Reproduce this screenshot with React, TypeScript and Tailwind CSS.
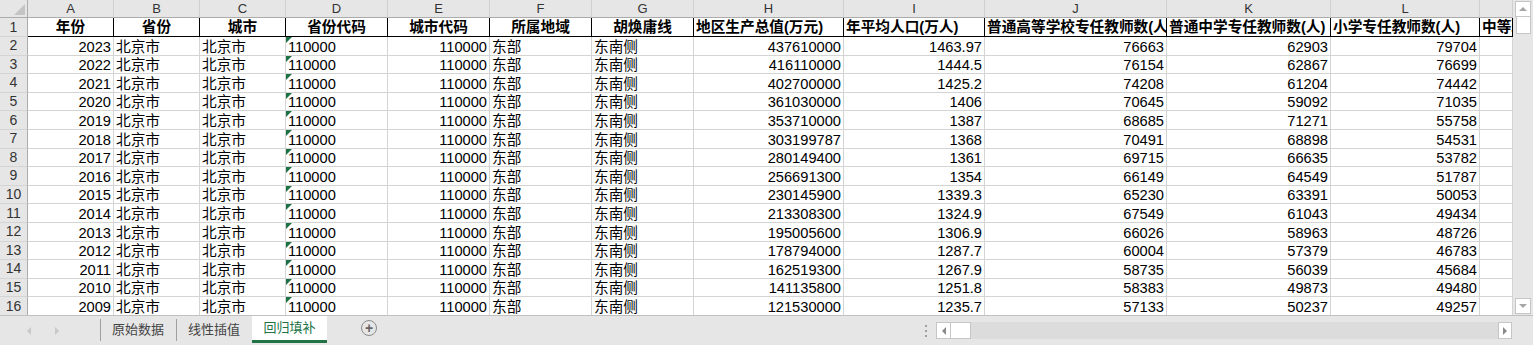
import React from 'react';

type Align = 'l' | 'r' | 'c';

const colLetters = ['A', 'B', 'C', 'D', 'E', 'F', 'G', 'H', 'I', 'J', 'K', 'L', ''];
const colWidths = [
  'w-[86px]', 'w-[86px]', 'w-[86px]', 'w-[102px]', 'w-[102px]', 'w-[102px]', 'w-[102px]',
  'w-[150px]', 'w-[141px]', 'w-[182px]', 'w-[164px]', 'w-[149px]', 'w-[33px]',
];

const headers = [
  '年份', '省份', '城市', '省份代码', '城市代码', '所属地域', '胡焕庸线',
  '地区生产总值(万元)', '年平均人口(万人)', '普通高等学校专任教师数(人)', '普通中学专任教师数(人)', '小学专任教师数(人)', '中等职业学校专任教师数(人)',
];
const headerAlign: Align[] = ['c', 'c', 'c', 'c', 'c', 'c', 'c', 'l', 'l', 'l', 'l', 'l', 'l'];

const rows: (string | number)[][] = [
  [2023, 437610000, 1463.97, 76663, 62903, 79704],
  [2022, 416110000, 1444.5, 76154, 62867, 76699],
  [2021, 402700000, 1425.2, 74208, 61204, 74442],
  [2020, 361030000, 1406, 70645, 59092, 71035],
  [2019, 353710000, 1387, 68685, 71271, 55758],
  [2018, 303199787, 1368, 70491, 68898, 54531],
  [2017, 280149400, 1361, 69715, 66635, 53782],
  [2016, 256691300, 1354, 66149, 64549, 51787],
  [2015, 230145900, 1339.3, 65230, 63391, 50053],
  [2014, 213308300, 1324.9, 67549, 61043, 49434],
  [2013, 195005600, 1306.9, 66026, 58963, 48726],
  [2012, 178794000, 1287.7, 60004, 57379, 46783],
  [2011, 162519300, 1267.9, 58735, 56039, 45684],
  [2010, 141135800, 1251.8, 58383, 49873, 49480],
  [2009, 121530000, 1235.7, 57133, 50237, 49257],
];

const alignCls = (a: Align) =>
  a === 'r' ? 'justify-end pr-[2px]' : a === 'c' ? 'justify-center' : 'justify-start pl-[2px]';

function Cell({ w, align, children, flag }: { w: string; align: Align; children?: React.ReactNode; flag?: boolean }) {
  return (
    <div className={`${w} shrink-0 h-full relative flex items-end overflow-hidden whitespace-nowrap border-r border-b border-[#d4d4d4] ${alignCls(align)}`}>
      {flag && (
        <div className="absolute left-0 top-0 w-0 h-0 border-t-[6px] border-r-[6px] border-t-[#1e7145] border-r-transparent" />
      )}
      <span className="leading-[16px]">{children}</span>
    </div>
  );
}

function DataRow({ n, r }: { n: number; r: (string | number)[] }) {
  const [year, gdp, pop, t1, t2, t3] = r;
  return (
    <div className="flex h-[18.6px] shrink-0">
      <div className="w-[28px] shrink-0 flex items-center justify-center bg-[#e6e6e6] border-r border-r-[#ababab] border-b border-b-[#d4d4d4] text-[#333] text-[14px]">{n}</div>
      <Cell w={colWidths[0]} align="r">{year}</Cell>
      <Cell w={colWidths[1]} align="l">北京市</Cell>
      <Cell w={colWidths[2]} align="l">北京市</Cell>
      <Cell w={colWidths[3]} align="l" flag>110000</Cell>
      <Cell w={colWidths[4]} align="r">110000</Cell>
      <Cell w={colWidths[5]} align="l">东部</Cell>
      <Cell w={colWidths[6]} align="l">东南侧</Cell>
      <Cell w={colWidths[7]} align="r">{gdp}</Cell>
      <Cell w={colWidths[8]} align="r">{pop}</Cell>
      <Cell w={colWidths[9]} align="r">{t1}</Cell>
      <Cell w={colWidths[10]} align="r">{t2}</Cell>
      <Cell w={colWidths[11]} align="r">{t3}</Cell>
      <Cell w={colWidths[12]} align="l"></Cell>
    </div>
  );
}

function VScroll() {
  return (
    <div className="w-[20px] h-full bg-[#e6e6e6] flex flex-col items-center pt-[1px] pb-[1px]">
      <div className="w-[16px] h-[16px] bg-white border border-[#c6c6c6] flex items-center justify-center">
        <div className="w-0 h-0 border-l-[4px] border-r-[4px] border-b-[4px] border-l-transparent border-r-transparent border-b-[#a6a6a6]" />
      </div>
      <div className="w-[15px] h-[17px] bg-white border border-[#c6c6c6] border-t-0" />
      <div className="flex-1" />
      <div className="w-[16px] h-[16px] bg-white border border-[#c6c6c6] flex items-center justify-center">
        <div className="w-0 h-0 border-l-[4px] border-r-[4px] border-t-[4px] border-l-transparent border-r-transparent border-t-[#a6a6a6]" />
      </div>
    </div>
  );
}

function TabBar() {
  return (
    <div className="h-[29px] flex items-stretch bg-[#e6e6e6] text-[13px] text-[#444]">
      <div className="w-[100px] shrink-0 flex items-center">
        <div className="ml-[27px] w-0 h-0 border-t-[4px] border-b-[4px] border-r-[4px] border-t-transparent border-b-transparent border-r-[#c8c8c8]" />
        <div className="ml-[24px] w-0 h-0 border-t-[4px] border-b-[4px] border-l-[4px] border-t-transparent border-b-transparent border-l-[#c8c8c8]" />
      </div>
      <div className="w-[76px] shrink-0 flex items-center border-l border-[#a0a0a0] my-[3px] mb-[4px] pl-[11px]">原始数据</div>
      <div className="w-[76px] shrink-0 flex items-center border-l border-[#a0a0a0] my-[3px] mb-[4px] pl-[11px]">线性插值</div>
      <div className="w-[75px] shrink-0 flex items-center justify-center bg-white border-b-[3px] border-[#217346] text-[#217346] mb-[2px]">回归填补</div>
      <div className="w-[34px] shrink-0" />
      <div className="w-[17px] shrink-0 flex items-center">
        <div className="w-[16px] h-[16px] rounded-full border border-[#8a8a8a] flex items-center justify-center text-[#666] text-[14px] leading-none font-bold -mt-[6px]">+</div>
      </div>
      <div className="flex-1" />
      <div className="w-[16px] flex flex-col items-center justify-center gap-[3px]">
        <div className="w-[2px] h-[2px] bg-[#a0a0a0]" />
        <div className="w-[2px] h-[2px] bg-[#a0a0a0]" />
        <div className="w-[2px] h-[2px] bg-[#a0a0a0]" />
      </div>
      <div className="w-[576px] ml-[2px] mr-[21px] my-[6px] flex items-stretch bg-[#dcdcdc]">
        <div className="w-[15px] bg-white border border-[#c6c6c6] flex items-center justify-center">
          <div className="w-0 h-0 border-t-[4px] border-b-[4px] border-r-[4px] border-t-transparent border-b-transparent border-r-[#8a8a8a]" />
        </div>
        <div className="w-[20px] bg-white border border-[#c6c6c6] border-l-0" />
        <div className="flex-1" />
        <div className="w-[14px] bg-white border border-[#c6c6c6] flex items-center justify-center">
          <div className="w-0 h-0 border-t-[4px] border-b-[4px] border-l-[4px] border-t-transparent border-b-transparent border-l-[#8a8a8a]" />
        </div>
      </div>
    </div>
  );
}

export default function App() {
  return (
    <div className="w-[1533px] h-[345px] overflow-hidden bg-white flex flex-col font-[Liberation_Sans,Noto_Sans_CJK_SC,sans-serif] text-black">
      <div className="flex h-[316px] border-b border-[#c0c0c0]">
        <div className="w-[1513px] flex flex-col overflow-hidden">
          {/* column letters */}
          <div className="flex h-[18px] shrink-0 bg-[#e6e6e6] text-[#333] text-[13px]">
            <div className="w-[28px] shrink-0 relative border-r border-b border-[#ababab]">
              <div className="absolute right-[2px] bottom-[2px] w-0 h-0 border-b-[11px] border-l-[11px] border-b-[#c4c4c4] border-l-transparent" />
            </div>
            {colLetters.map((l, i) => (
              <div key={i} className={`${colWidths[i]} shrink-0 flex items-center justify-center border-r border-r-[#d0d0d0] border-b border-b-[#ababab]`}>{l}</div>
            ))}
          </div>
          {/* header row */}
          <div className="flex h-[19px] shrink-0 font-bold text-[14.67px]">
            <div className="w-[28px] shrink-0 flex items-center justify-center bg-[#e6e6e6] border-r border-r-[#ababab] border-b border-b-[#d4d4d4] text-[#333] text-[14px] font-normal">1</div>
            {headers.map((h, i) => (
              <div key={i} className={`${colWidths[i]} shrink-0 h-full flex items-end overflow-hidden whitespace-nowrap border-r border-b border-black ${alignCls(headerAlign[i])}`}>
                <span className="leading-[17px]">{h}</span>
              </div>
            ))}
          </div>
          <div className="text-[14.67px]">
            {rows.map((r, i) => (
              <DataRow key={i} n={i + 2} r={r} />
            ))}
          </div>
        </div>
        <VScroll />
      </div>
      <TabBar />
    </div>
  );
}
